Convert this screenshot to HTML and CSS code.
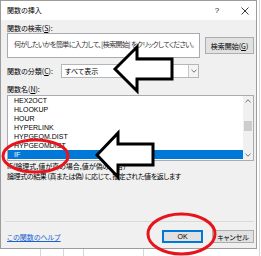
FILE: index.html
```html
<!DOCTYPE html>
<html lang="ja">
<head>
<meta charset="utf-8">
<title>関数の挿入</title>
<link rel="stylesheet" href="styles.css">
</head>
<body>
<div class="screen">
  <div class="dialog">
    <div class="titlebar">
      <span class="title">関数の挿入</span>
      <span class="tb-help">?</span>
      <span class="tb-close"><svg width="8" height="8" viewBox="0 0 8 8"><path d="M0.5 0.5L7.5 7.5M7.5 0.5L0.5 7.5" stroke="#222" stroke-width="0.9" fill="none"/></svg></span>
    </div>
    <div class="body">
      <div class="label row-label">関数の検索(<u>S</u>):</div>
      <div class="search-row">
        <div class="textbox">何がしたいかを簡単に入力して、[検索開始] をクリックしてください。</div>
        <div class="btn btn-search">検索開始(<u>G</u>)</div>
      </div>
      <div class="cat-row">
        <span class="label cat-label">関数の分類(<u>C</u>):</span>
        <div class="combo">
          <span class="combo-text">すべて表示</span>
          <span class="combo-btn"><svg width="6" height="4" viewBox="0 0 6 4"><path d="M0.5 0.8L3 3.2L5.5 0.8" stroke="#666" stroke-width="0.9" fill="none"/></svg></span>
        </div>
      </div>
      <div class="label name-label">関数名(<u>N</u>):</div>
      <div class="listbox">
        <ul class="items">
          <li>HEX2OCT</li>
          <li>HLOOKUP</li>
          <li>HOUR</li>
          <li>HYPERLINK</li>
          <li>HYPGEOM.DIST</li>
          <li>HYPGEOMDIST</li>
          <li class="sel">IF</li>
        </ul>
        <div class="scrollbar">
          <span class="sb-arrow"><svg width="6" height="4" viewBox="0 0 6 4"><path d="M0.5 3.2L3 0.8L5.5 3.2" stroke="#606060" stroke-width="0.9" fill="none"/></svg></span>
          <div class="track"><div class="thumb"></div></div>
          <span class="sb-arrow"><svg width="6" height="4" viewBox="0 0 6 4"><path d="M0.5 0.8L3 3.2L5.5 0.8" stroke="#606060" stroke-width="0.9" fill="none"/></svg></span>
        </div>
      </div>
      <div class="desc">
        <div class="desc-line">IF(論理式,値が真の場合,値が偽の場合)</div>
        <div class="desc-line desc-long">論理式の結果 (真または偽) に応じて、指定された値を返します</div>
      </div>
      <div class="separator"></div>
      <div class="footer">
        <a class="help-link">この関数のヘルプ</a>
        <div class="btn btn-ok">OK</div>
        <div class="btn btn-cancel">キャンセル</div>
      </div>
    </div>
  </div>
  <svg class="annot" width="261" height="256" viewBox="0 0 261 256">
    <polygon points="115,69 137,47 137,59 172,59 172,79 137,79 137,91" fill="#fff" stroke="#000" stroke-width="3" stroke-linejoin="miter"/>
    <polygon points="97,155 118,133 118,144 153,144 153,165 118,165 118,177" fill="#fff" stroke="#000" stroke-width="3" stroke-linejoin="miter"/>
    <ellipse cx="35.5" cy="156" rx="32.5" ry="16" fill="none" stroke="#e8141c" stroke-width="3"/>
    <ellipse cx="181.5" cy="234" rx="33.5" ry="20" fill="none" stroke="#e8141c" stroke-width="3"/>
  </svg>
</div>
</body>
</html>
```

FILE: styles.css
```css
* { box-sizing: border-box; }
html, body { margin: 0; padding: 0; }
body {
  font-family: "Noto Sans CJK JP", sans-serif;
  font-size: 7px;
  font-feature-settings: "palt";
  color: #000;
  background: #fff;
}
.screen {
  position: relative;
  width: 261px;
  height: 256px;
  overflow: hidden;
  background-color: #fff;
  background-image:
    linear-gradient(#d6d6d6, #d6d6d6),
    linear-gradient(#d6d6d6, #d6d6d6),
    linear-gradient(#d6d6d6, #d6d6d6),
    linear-gradient(#d6d6d6, #d6d6d6),
    linear-gradient(#d6d6d6, #d6d6d6);
  background-size: 1px 100%, 1px 8px, 1px 8px, 1px 8px, 1px 8px;
  background-position: 259px 0, 40px 249px, 63px 249px, 83px 249px, 143px 249px;
  background-repeat: no-repeat;
}
.dialog {
  width: 257px;
  border: 1px solid #9c9c9c;
  background: #f0f0f0;
  display: flex;
  flex-direction: column;
}
.titlebar {
  height: 19px;
  background: #fff;
  display: flex;
  align-items: center;
  padding-left: 6px;
}
.title { line-height: 19px; }
.tb-help {
  margin-left: auto;
  width: 22px;
  text-align: center;
  font-family: "Liberation Sans", sans-serif;
  font-size: 8px;
  color: #222;
}
.tb-close {
  width: 22px;
  margin-left: 6px;
  display: flex;
  justify-content: center;
  align-items: center;
}
.body {
  padding: 3px 2px 5px 6px;
  display: flex;
  flex-direction: column;
}
.label { line-height: 10px; white-space: nowrap; }
u { text-decoration: underline; text-underline-offset: 1px; }
.search-row {
  height: 25px;
  display: flex;
  align-items: center;
  gap: 5px;
}
.textbox {
  width: 193px;
  height: 25px;
  align-self: flex-start;
  background: #fff;
  border: 1px solid #a9abb0;
  padding: 5px 0 0 6px;
  line-height: 10px;
  color: #333;
  white-space: nowrap;
  overflow: hidden;
  letter-spacing: -0.62px;
}
.btn {
  background: #e1e1e1;
  border: 1px solid #adadad;
  display: flex;
  align-items: center;
  justify-content: center;
  white-space: nowrap;
}
.btn-search { width: 49px; height: 17px; }
.cat-row {
  margin-top: 6px;
  height: 14px;
  display: flex;
  align-items: center;
}
.cat-label { width: 54px; }
.combo {
  width: 138px;
  height: 14px;
  background: #fff;
  border: 1px solid #b4b6ba;
  display: flex;
  align-items: center;
}
.combo-text { padding-left: 3px; flex: 1; line-height: 12px; }
.combo-btn {
  width: 10px;
  height: 12px;
  border-left: 1px solid #c8c8c8;
  background: #f4f4f4;
  display: flex;
  align-items: center;
  justify-content: center;
}
.name-label { margin-top: 6px; }
.listbox {
  margin-top: 1px;
  width: 247px;
  height: 66px;
  background: #fff;
  border: 1px solid #a9abb0;
  display: flex;
  overflow: hidden;
}
.items {
  flex: 1;
  list-style: none;
  margin: 0;
  padding: 0;
  font-family: "Liberation Sans", sans-serif;
  font-size: 7px;
}
.items li {
  height: 9px;
  line-height: 9px;
  padding-left: 6px;
  white-space: nowrap;
}
.items li.sel { background: #0078d7; color: #fff; }
.scrollbar {
  width: 10px;
  background: #f0f0f0;
  display: flex;
  flex-direction: column;
}
.sb-arrow {
  height: 10px;
  display: flex;
  align-items: center;
  justify-content: center;
}
.track { flex: 1; padding: 15px 1px 0 1px; }
.thumb { height: 10px; background: #cdcdcd; }
.desc { line-height: 10px; white-space: nowrap; }
.desc-long { letter-spacing: -0.4px; }
.separator {
  margin-top: 40px;
  margin-left: -2px;
  height: 1px;
  background: #dadada;
}
.footer {
  margin-top: 8px;
  height: 13px;
  display: flex;
  align-items: center;
}
.help-link {
  color: #1a62d0;
  text-decoration: underline;
  text-underline-offset: 1px;
  line-height: 10px;
}
.btn-ok {
  margin-left: auto;
  width: 41px;
  height: 13px;
  border: 1px solid #0078d7;
  box-shadow: inset 0 0 0 1px #0078d7;
  font-family: "Liberation Sans", sans-serif;
}
.btn-cancel {
  margin-left: 9px;
  width: 42px;
  height: 13px;
}
.annot {
  position: absolute;
  left: 0;
  top: 0;
  pointer-events: none;
}
```
